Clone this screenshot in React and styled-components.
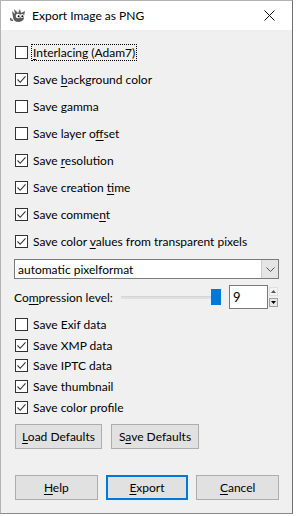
import React from 'react'
import styled, { createGlobalStyle } from 'styled-components'

const GlobalStyle = createGlobalStyle`
  html, body {
    margin: 0;
    padding: 0;
    background: #ffffff;
  }
  body {
    font-family: Lato, "Noto Sans", sans-serif;
    font-size: 12px;
    color: #000;
  }
`

const Window = styled.div`
  width: 293px;
  height: 514px;
  box-sizing: border-box;
  border: 1px solid #b4b4b4;
  border-right-color: #6f6f6f;
  border-bottom-color: #8a8a8a;
  background: #f0f0f0;
  display: flex;
  flex-direction: column;
`

const TitleBar = styled.div`
  height: 29px;
  flex: none;
  background: #ffffff;
  display: flex;
  align-items: center;
  padding: 0 0 0 9px;
`

const Title = styled.span`
  margin-left: 5px;
  font-size: 12px;
  color: #000;
`

const Close = styled.div`
  margin-left: auto;
  width: 46px;
  height: 29px;
  display: flex;
  align-items: center;
  justify-content: center;
`

const Body = styled.div`
  flex: 1;
  display: flex;
  flex-direction: column;
  padding: 9px 13px 0 12px;
`

const CheckRow = styled.div`
  height: ${p => p.$h}px;
  display: flex;
  align-items: center;
  padding-left: 2px;
`

const Box = styled.span`
  width: 13px;
  height: 13px;
  box-sizing: border-box;
  border: 1px solid #333333;
  background: #ffffff;
  flex: none;
  display: flex;
  align-items: center;
  justify-content: center;
`

const Label = styled.span`
  margin-left: 3px;
  padding: 1px 1px;
  border: 1px ${p => (p.$focus ? 'dotted #000' : 'solid transparent')};
  line-height: 13px;
  white-space: nowrap;
`

const U = styled.span`
  text-decoration: underline;
  text-underline-offset: 2px;
`

const Combo = styled.div`
  margin-top: 4px;
  height: 20px;
  box-sizing: border-box;
  border: 1px solid #7a7a7a;
  background: #ffffff;
  display: flex;
  align-items: stretch;
  margin-left: 1px;
`

const ComboText = styled.span`
  flex: 1;
  display: flex;
  align-items: center;
  padding-left: 3px;
`

const ComboButton = styled.span`
  width: 16px;
  background: #e5e5e5;
  border-left: 1px solid #cccccc;
  display: flex;
  align-items: center;
  justify-content: center;
`

const LevelRow = styled.div`
  margin-top: 6px;
  height: 24px;
  display: flex;
  align-items: center;
  margin-left: 1px;
`

const Slider = styled.div`
  margin-left: auto;
  width: 100px;
  height: 16px;
  position: relative;
  display: flex;
  align-items: center;
`

const Track = styled.div`
  flex: 1;
  height: 2px;
  background: #e0e0e0;
  border-top: 1px solid #d4d4d4;
`

const Thumb = styled.div`
  position: absolute;
  right: 0;
  top: 0;
  width: 10px;
  height: 16px;
  background: #0078d7;
`

const Spin = styled.div`
  margin-left: 8px;
  display: flex;
  height: 24px;
`

const SpinField = styled.div`
  width: 39px;
  box-sizing: border-box;
  border: 1px solid #7a7a7a;
  background: #fff;
  display: flex;
  align-items: center;
  padding-left: 3px;
  font-size: 13px;
`

const SpinArrows = styled.div`
  width: 11px;
  display: flex;
  flex-direction: column;
  justify-content: center;
  align-items: center;
  gap: 2px;
`

const ArrowCell = styled.span`
  width: 9px;
  height: 9px;
  box-sizing: border-box;
  border: 1px solid ${p => (p.$active ? '#a0a0a0' : '#e0e0e0')};
  background: ${p => (p.$active ? '#e8e8e8' : '#f4f4f4')};
  display: flex;
  align-items: center;
  justify-content: center;
`

const SmallGroup = styled.div`
  margin-top: 5px;
  display: flex;
  flex-direction: column;
`

const ButtonRow = styled.div`
  display: flex;
  gap: ${p => p.$gap}px;
  margin-top: ${p => p.$top}px;
  padding-left: 2px;
`

const Button = styled.button`
  width: ${p => p.$w}px;
  height: 25px;
  box-sizing: border-box;
  background: #e1e1e1;
  border: ${p => (p.$default ? '2px solid #0078d7' : '1px solid #adadad')};
  font-family: inherit;
  font-size: 12px;
  color: #000;
  padding: 0;
  border-radius: 0;
`

function Check({ on }) {
  return (
    <Box>
      {on && (
        <svg width="11" height="11" viewBox="0 0 11 11">
          <path d="M1.5 5.5 L4.2 8.3 L9.5 2.3" fill="none" stroke="#333" strokeWidth="1.1" />
        </svg>
      )}
    </Box>
  )
}

function Wilber() {
  return (
    <svg width="17" height="15" viewBox="0 0 17 15">
      <path d="M2 3 L5 6 L4 1 L8 5 L10 1 L11 5 L15 3 L14 8 Q15 13 9 14 Q3 14 3 9 Z" fill="#5b5b5b" />
      <circle cx="8" cy="8" r="2.3" fill="#fff" />
      <circle cx="12" cy="8" r="2.1" fill="#fff" />
      <circle cx="8.6" cy="8.2" r="1" fill="#000" />
      <circle cx="12.4" cy="8.2" r="1" fill="#000" />
      <path d="M1 10 Q0 13 3 12" fill="none" stroke="#5b5b5b" strokeWidth="1.5" />
    </svg>
  )
}

const mainOptions = [
  { on: false, label: <><U>I</U>nterlacing (Adam7)</>, focus: true },
  { on: true, label: <>Save <U>b</U>ackground color</> },
  { on: false, label: <>Save gamma</> },
  { on: false, label: <>Save layer o<U>f</U>fset</> },
  { on: true, label: <>Save <U>r</U>esolution</> },
  { on: true, label: <>Save creation <U>t</U>ime</> },
  { on: true, label: <>Save comme<U>n</U>t</> },
  { on: true, label: <>Save color <U>v</U>alues from transparent pixels</> },
]

const metaOptions = [
  { on: false, label: 'Save Exif data' },
  { on: true, label: 'Save XMP data' },
  { on: true, label: 'Save IPTC data' },
  { on: true, label: 'Save thumbnail' },
  { on: true, label: 'Save color profile' },
]

export default function App() {
  return (
    <>
      <GlobalStyle />
      <Window>
        <TitleBar>
          <Wilber />
          <Title>Export Image as PNG</Title>
          <Close>
            <svg width="11" height="11" viewBox="0 0 11 11">
              <path d="M0.5 0.5 L10.5 10.5 M10.5 0.5 L0.5 10.5" stroke="#111" strokeWidth="1" />
            </svg>
          </Close>
        </TitleBar>
        <Body>
          {mainOptions.map((o, i) => (
            <CheckRow key={i} $h={27}>
              <Check on={o.on} />
              <Label $focus={o.focus}>{o.label}</Label>
            </CheckRow>
          ))}
          <Combo>
            <ComboText>automatic pixelformat</ComboText>
            <ComboButton>
              <svg width="9" height="5" viewBox="0 0 9 5">
                <path d="M0.5 0.5 L4.5 4.5 L8.5 0.5" fill="none" stroke="#555" strokeWidth="1" />
              </svg>
            </ComboButton>
          </Combo>
          <LevelRow>
            <span>Co<U>m</U>pression level:</span>
            <Slider>
              <Track />
              <Thumb />
            </Slider>
            <Spin>
              <SpinField>9</SpinField>
              <SpinArrows>
                <ArrowCell>
                  <svg width="5" height="3" viewBox="0 0 5 3"><path d="M0 3 L2.5 0 L5 3 Z" fill="#555" /></svg>
                </ArrowCell>
                <ArrowCell $active>
                  <svg width="5" height="3" viewBox="0 0 5 3"><path d="M0 0 L2.5 3 L5 0 Z" fill="#000" /></svg>
                </ArrowCell>
              </SpinArrows>
            </Spin>
          </LevelRow>
          <SmallGroup>
            {metaOptions.map((o, i) => (
              <CheckRow key={i} $h={20.75}>
                <Check on={o.on} />
                <Label>{o.label}</Label>
              </CheckRow>
            ))}
          </SmallGroup>
          <ButtonRow $gap={9} $top={6}>
            <Button $w={87}><U>L</U>oad Defaults</Button>
            <Button $w={88}>S<U>a</U>ve Defaults</Button>
          </ButtonRow>
          <ButtonRow $gap={8} $top={26}>
            <Button $w={83}><U>H</U>elp</Button>
            <Button $w={83} $default><U>E</U>xport</Button>
            <Button $w={83}><U>C</U>ancel</Button>
          </ButtonRow>
        </Body>
      </Window>
    </>
  )
}
